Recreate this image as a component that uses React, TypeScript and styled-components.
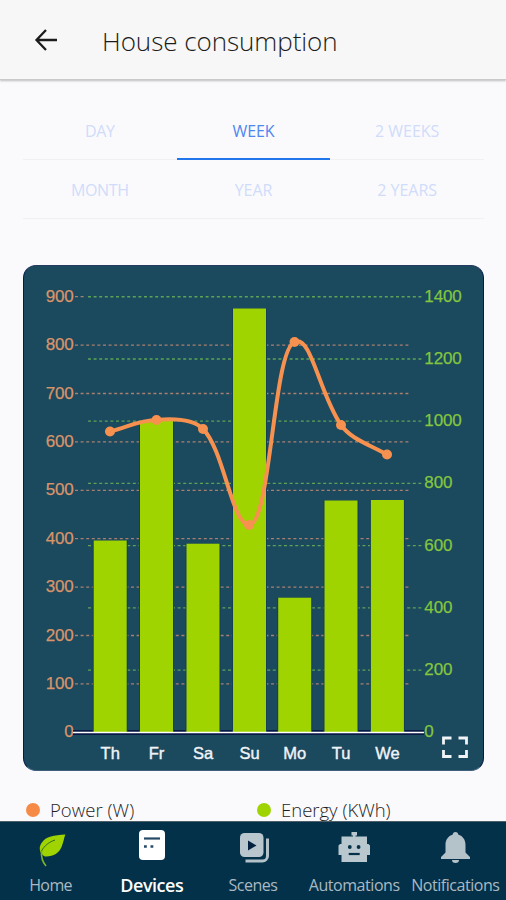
import React from "react";
import styled, { createGlobalStyle } from "styled-components";

const GlobalStyle = createGlobalStyle`
  * { box-sizing: border-box; }
  body { margin: 0; background: #fafafd; }
`;

const Screen = styled.div`
  width: 506px;
  height: 900px;
  display: flex;
  flex-direction: column;
  overflow: hidden;
  background: #fafafd;
  font-family: "Open Sans", "Noto Sans", sans-serif;
`;

const Header = styled.header`
  height: 80px;
  flex: none;
  display: flex;
  align-items: center;
  padding: 0 0 0 34px;
  background: #f7f7f7;
  border-bottom: 1px solid #cacaca;
  box-shadow: 0 1px 2px rgba(0, 0, 0, 0.25);
`;

const BackIcon = styled.svg`
  width: 24px;
  height: 24px;
  display: block;
`;

const Fit = styled.span<{ $spacing?: number }>`
  white-space: nowrap;
  letter-spacing: ${(p) => p.$spacing ?? 0}px;
`;

const Title = styled.h1`
  margin: 2px 0 0 44px;
  font-size: 26px;
  line-height: 34px;
  font-weight: 300;
  color: #1c1c1c;
`;

const Content = styled.main`
  flex: 1;
  min-height: 0;
  padding: 21px 22px 0 23px;
  display: flex;
  flex-direction: column;
`;

const Tabs = styled.nav`
  display: grid;
  grid-template-columns: repeat(3, 1fr);
  grid-auto-rows: 59px;
`;

const Tab = styled.button<{ $active?: boolean }>`
  border: 0;
  padding: 1px 0 0;
  background: none;
  font: 400 16px/24px "Open Sans", sans-serif;
  color: ${(p) => (p.$active ? "#4f87ee" : "#d0dcfa")};
  box-shadow: ${(p) => (p.$active ? "inset 0 -2px #2076ea" : "inset 0 -1px #f0f0f3")};
`;

const ChartCard = styled.section`
  margin-top: 46px;
  height: 506px;
  flex: none;
  border-radius: 13px;
  overflow: hidden;
  background: #1b495e;
  border: 1px solid #05194a;
  border-top-color: #243c60;
  border-bottom-color: #3d5f7c;
`;

const ChartSvg = styled.svg`
  display: block;
  width: 459px;
  height: 503px;
  font-family: "Liberation Sans", Arial, sans-serif;
`;

const Legend = styled.div`
  display: grid;
  grid-template-columns: 231px 1fr;
  padding: 24px 0 0 3px;
`;

const LegendItem = styled.div`
  display: flex;
  align-items: center;
  height: 29px;
  font-size: 18.5px;
  font-weight: 300;
  color: #1f1f1f;
`;

const Dot = styled.i<{ $color: string }>`
  width: 14px;
  height: 14px;
  margin-right: 10px;
  border-radius: 50%;
  background: ${(p) => p.$color};
`;

const BottomBar = styled.nav`
  height: 78px;
  flex: none;
  display: grid;
  grid-template-columns: repeat(5, 1fr);
  background: #033149;
  position: relative;
  box-shadow: 0 -1px #4f5f68;
`;

const NavItem = styled.a<{ $active?: boolean }>`
  display: flex;
  flex-direction: column;
  align-items: center;
  padding-top: 6px;
  color: ${(p) => (p.$active ? "#fff" : "#aab9c2")};
  font-size: ${(p) => (p.$active ? 18 : 16)}px;
  line-height: 26px;
  font-weight: ${(p) => (p.$active ? 600 : 500)};
`;

const NavIcon = styled.svg`
  display: block;
  width: 40px;
  height: 40px;
  margin-bottom: 4px;
  flex: none;
`;

const BASE = 732;
const leftTicks = [900, 800, 700, 600, 500, 400, 300, 200, 100, 0];
const rightTicks = [1400, 1200, 1000, 800, 600, 400, 200, 0];
const bars = [
  { day: "Th", x: 110.2, top: 540.5 },
  { day: "Fr", x: 156.5, top: 421 },
  { day: "Sa", x: 203, top: 543.7 },
  { day: "Su", x: 249.5, top: 308.5 },
  { day: "Mo", x: 294.7, top: 597.7 },
  { day: "Tu", x: 341, top: 500.5 },
  { day: "We", x: 387.4, top: 500 },
];
const points = [
  [110, 431.5], [156.5, 420], [203, 429], [249, 525], [294.5, 342], [341, 425], [387, 454.5],
];

function Chart() {
  return (
    <ChartSvg viewBox="24 266 459 503">
      {leftTicks.map((v) => {
        const y = BASE + 0.3 - v * 0.4840;
        return (
          <g key={v}>
            {v > 0 && <path d={`M75 ${y}H${v === 900 ? 86 : 411}`} stroke="#a98070" strokeWidth="1.3" strokeDasharray="3 2.6" />}
            <text x="73.5" y={y + 5} fontSize="17" letterSpacing="-.2" textAnchor="end" fill="#d9946a" stroke="#d9946a" strokeWidth=".25">{v}</text>
          </g>
        );
      })}
      {rightTicks.map((v) => {
        const y = BASE + 0.3 - v * 0.3111;
        return (
          <g key={v}>
            {v > 0 && <path d={`M88 ${y}H424`} stroke="#5da256" strokeWidth="1.3" strokeDasharray="3 2.6" />}
            <text x="424.3" y={y + 5} fontSize="17" letterSpacing="-.1" fill="#83c63e" stroke="#83c63e" strokeWidth=".25">{v}</text>
          </g>
        );
      })}
      <path d="M73 731H424M73 734H424" stroke="#0a1846" strokeWidth="2" />
      {bars.map((b) => (
        <g key={b.day}>
          <rect x={b.x - 17.5} y={b.top} width="35" height={BASE - b.top} fill="#143f57" />
          <rect x={b.x - 16.5} y={b.top} width="33" height={BASE - b.top} fill="#9fd400" />
          <text x={b.x} y="759" fontSize="16.5" textAnchor="middle" fill="#f0f4f8" stroke="#f0f4f8" strokeWidth=".4">{b.day}</text>
        </g>
      ))}
      <path d="M73 732.5H424" stroke="#fff" strokeWidth="1.5" />
      <path
        d="M110 431.5C126 428 139 420 156.5 420C178 418 194 420 203 429C224 450 232 525 249 525C271 525 273 350 294.5 342C311 334 319 393 341 425C351 439 368 444 387 454.5"
        fill="none" stroke="#f79150" strokeWidth="4"
      />
      {points.map(([x, y]) => <circle key={x} cx={x} cy={y} r="5" fill="#f79150" />)}
      <path d="M443.500 744.500V738H451.500M458.500 738H466.500V744.500M466.500 750V756.500H458.500M451.500 756.500H443.500V750" fill="none" stroke="#f1f4f7" strokeWidth="2.8" />
    </ChartSvg>
  );
}

const icons = {
  leaf: (
    <>
      <path d="M34.500 6.500C33 9 33 13 30.500 19C28 25 22 29 14 28.500C9 26 7 20 10.500 15C15 8 23 7.500 34.500 6.500Z" fill="#9fd400" />
      <path d="M10.500 23C13 18 18 14 24 12" fill="none" stroke="#2f6b2f" strokeWidth="1" />
      <path d="M10.500 23C10 29 11.500 34 15 38" fill="none" stroke="#7cb32a" strokeWidth="1.600" />
    </>
  ),
  device: (
    <>
      <rect x="7" y="2" width="26" height="30" rx="4" fill="#fff" />
      <path d="M12 10.500H28" stroke="#254a66" strokeWidth="2.200" />
      <path d="M12 18.500h2.800M18.500 18.500h2.800" stroke="#254a66" strokeWidth="2.600" />
    </>
  ),
  scenes: (
    <>
      <path d="M34.500 10.500V28a5 5 0 0 1-5 5H12.500" fill="none" stroke="#b4c2ca" strokeWidth="3" />
      <rect x="7" y="5" width="23.500" height="24" rx="4.500" fill="#b9c6ce" />
      <path d="M15 12.500V22.500L23.500 17.500Z" fill="#03213f" />
    </>
  ),
  robot: (
    <>
      <path d="M17.500 4h5.500v3.500h-1.500v1H33v7.500h1.500l1.500 1.500V27h-3v7H7.500V27h-3v-9.500L6 16h1.500V8.500H19v-1h-1.500Z" fill="#b9c7cf" />
      <circle cx="15.800" cy="19" r="1.900" fill="#033149" />
      <circle cx="24.600" cy="19" r="1.900" fill="#033149" />
      <path d="M14.700 26H25.700" stroke="#033149" strokeWidth="2.200" />
    </>
  ),
  bell: (
    <>
      <path d="M20.500 4c1.700 0 2.700 1 2.700 2.600C28 8.200 30.500 12 30.500 17v7.500l4.500 4.500v2H6v-2l4.500-4.500V17c0-5 2.500-8.800 7.300-10.400C17.800 5 18.800 4 20.500 4Z" fill="#b4c2ca" />
      <path d="M17 32h7a3.500 3 0 0 1-7 0Z" fill="#b4c2ca" />
    </>
  ),
};

const tabs = [
  { label: "DAY" }, { label: "WEEK", active: true, spacing: -0.1 }, { label: "2 WEEKS", spacing: 0 },
  { label: "MONTH" }, { label: "YEAR", spacing: -0.1 }, { label: "2 YEARS", spacing: 0 },
];
const navItems = [
  { label: "Home", icon: icons.leaf, spacing: -0.6 },
  { label: "Devices", icon: icons.device, active: true, spacing: -0.45 },
  { label: "Scenes", icon: icons.scenes, spacing: -0.5 },
  { label: "Automations", icon: icons.robot, spacing: -0.45 },
  { label: "Notifications", icon: icons.bell, spacing: -0.45 },
];

export default function App() {
  return (
    <Screen>
      <GlobalStyle />
      <Header>
        <BackIcon viewBox="0 0 24 24">
          <path d="M23 12H2.500M12 2L2.500 12L12 22" fill="none" stroke="#1c1c1c" strokeWidth="2.300" />
        </BackIcon>
        <Title><Fit $spacing={-0.05}>House consumption</Fit></Title>
      </Header>
      <Content>
        <Tabs>
          {tabs.map((t) => <Tab key={t.label} $active={t.active}><Fit $spacing={t.spacing ?? -0.4}>{t.label}</Fit></Tab>)}
        </Tabs>
        <ChartCard><Chart /></ChartCard>
        <Legend>
          <LegendItem><Dot $color="#f58b47" /><Fit $spacing={0.05}>Power (W)</Fit></LegendItem>
          <LegendItem><Dot $color="#9fd400" /><Fit $spacing={0}>Energy (KWh)</Fit></LegendItem>
        </Legend>
      </Content>
      <BottomBar>
        {navItems.map((n) => (
          <NavItem key={n.label} $active={n.active}>
            <NavIcon viewBox="0 0 40 40">{n.icon}</NavIcon>
            <Fit $spacing={n.spacing}>{n.label}</Fit>
          </NavItem>
        ))}
      </BottomBar>
    </Screen>
  );
}
